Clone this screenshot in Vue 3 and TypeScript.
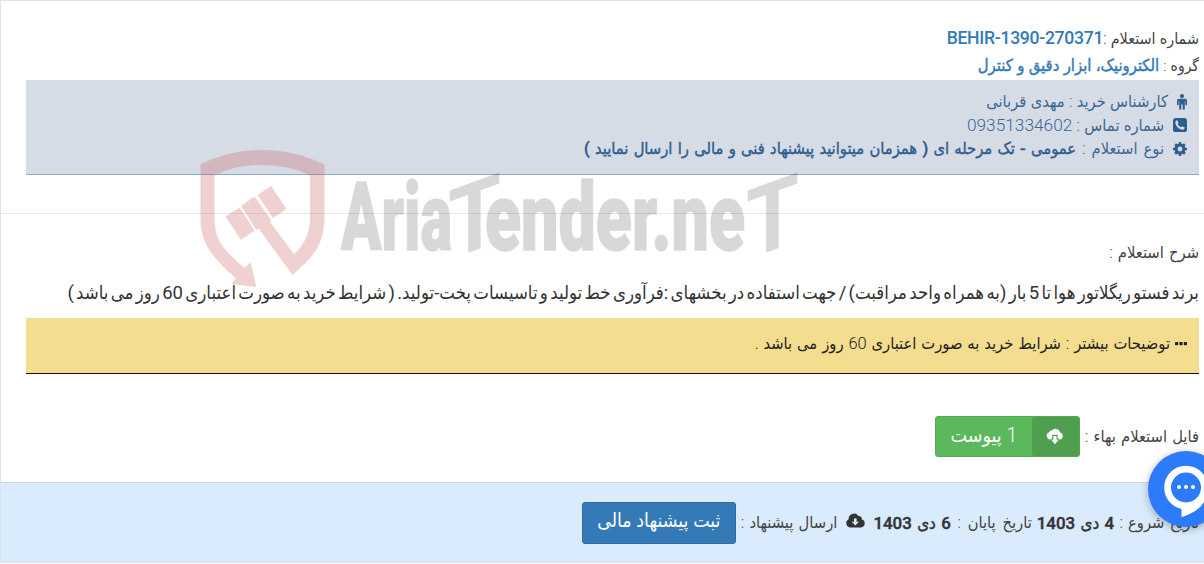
<script setup lang="ts">
interface Inquiry {
  number: string;
  group: string;
  expert: string;
  phone: string;
  type: string;
  title: string;
  description: string;
  attachments: number;
  startDate: string;
  endDate: string;
}

const inquiry: Inquiry = {
  number: 'BEHIR-1390-270371',
  group: 'الکترونیک، ابزار دقیق و کنترل',
  expert: 'مهدی قربانی',
  phone: '09351334602',
  type: 'عمومی - تک مرحله ای ( همزمان میتوانید پیشنهاد فنی و مالی را ارسال نمایید )',
  title:
    'برند فستو ریگلاتور هوا تا 5 بار (به همراه واحد مراقبت) / جهت استفاده در بخشهای :فرآوری خط تولید و تاسیسات پخت-تولید. ( شرایط خرید به صورت اعتباری 60 روز می باشد )',
  description: 'شرایط خرید به صورت اعتباری 60 روز می باشد .',
  attachments: 1,
  startDate: '4 دی 1403',
  endDate: '6 دی 1403',
};
</script>

<template>
  <div class="inquiry" dir="rtl">
    <section class="summary">
      <div class="line number-line">
        <span>شماره استعلام :</span><strong class="code">{{ inquiry.number }}</strong>
      </div>
      <div class="line group-line">
        <span>گروه :&nbsp;</span><strong>{{ inquiry.group }}</strong>
      </div>
      <div class="contact">
        <div class="contact-row">
          <svg class="icon-person" width="12" height="16" viewBox="0 0 12 16" fill="currentColor">
            <circle cx="6" cy="2.1" r="2.1" />
            <path d="M3 4.8h6a2 2 0 0 1 2 2v3.6a.8.8 0 0 1-1.7 0V7.2h-.5v7.6a1 1 0 0 1-2.1 0v-4.3h-1.4v4.3a1 1 0 0 1-2.1 0V7.2h-.5v3.2a.8.8 0 0 1-1.7 0V6.8a2 2 0 0 1 2-2z" />
          </svg>
          <span>کارشناس خرید : {{ inquiry.expert }}</span>
        </div>
        <div class="contact-row">
          <svg class="icon" width="14" height="14" viewBox="0 0 14 14">
            <rect width="14" height="14" rx="2.6" fill="currentColor" />
            <path d="M4.2 2.3 5.5 4.8 4.7 6c.7 1.5 1.8 2.5 3.2 3.2l1.2-1 2.6 1.4c-.1 1.5-1 2.1-2.2 2.1C6 11.5 2.5 8 2.3 4.5c0-1.2.7-2 1.9-2.2z" fill="#d6dce5" />
          </svg>
          <span>شماره تماس : <span class="phone">{{ inquiry.phone }}</span></span>
        </div>
        <div class="contact-row type-row">
          <svg class="icon" width="14" height="14" viewBox="0 0 14 14" fill="currentColor">
            <path fill-rule="evenodd" d="M5.9 0h2.2l.3 1.8 1.1.5L11 1.3 12.7 3l-1 1.5.5 1.1 1.8.3v2.2l-1.8.3-.5 1.1 1 1.5L11 12.7l-1.5-1-1.1.5-.3 1.8H5.9l-.3-1.8-1.1-.5-1.5 1L1.3 11l1-1.5-.5-1.1L0 8.1V5.9l1.8-.3.5-1.1-1-1.5L3 1.3l1.5 1 1.1-.5zM7 4.6a2.4 2.4 0 1 0 0 4.8 2.4 2.4 0 0 0 0-4.8z" />
          </svg>
          <span class="type-label">نوع استعلام :&nbsp;</span><strong>{{ inquiry.type }}</strong>
        </div>
      </div>
    </section>

    <section class="details">
      <div class="details-label">شرح استعلام :</div>
      <h4 class="title">{{ inquiry.title }}</h4>
      <div class="note">
        <svg class="dots" width="12" height="4" viewBox="0 0 12 4" fill="currentColor">
          <rect width="3.2" height="3.2" rx=".6" />
          <rect x="4.4" width="3.2" height="3.2" rx=".6" />
          <rect x="8.8" width="3.2" height="3.2" rx=".6" />
        </svg>
        <span>توضیحات بیشتر : {{ inquiry.description }}</span>
      </div>
      <div class="file-row">
        <span>فایل استعلام بهاء :</span>
        <button class="btn-file" type="button">
          <span class="btn-label">
            <svg width="18" height="17" viewBox="0 0 18 17">
              <path d="M4.3 11.5a3.8 3.8 0 0 1-1.200-7.300A3.200 3.200 0 0 1 6.300 2.200 4.500 4.500 0 0 1 14 4.600a3.500 3.500 0 0 1-.3 6.900z" fill="#fff" />
              <path d="M6.200 6.800h5.600v4h2L9 16.500l-4.800-5.700h2z" fill="#4f9f4f" />
              <path d="M7.400 8h3.200v3.700h2.200L9 16.300l-3.800-4.600h2.200z" fill="#fff" />
            </svg>
          </span>
          <span class="btn-text">{{ inquiry.attachments }} پیوست</span>
        </button>
      </div>
    </section>

    <footer class="actions">
      <span>تاریخ شروع :&nbsp;</span><strong>{{ inquiry.startDate }}</strong>
      <span class="end-label">تاریخ پایان :&nbsp;</span><strong>{{ inquiry.endDate }}</strong>
      <svg class="icon-cloud" width="19" height="15" viewBox="0 0 19 15">
        <path d="M4.500 14.500A4.400 4.400 0 0 1 2.600 6.200 5.300 5.300 0 0 1 12.300 3a3 3 0 0 1 3.500 3.500 4.100 4.100 0 0 1-.8 8z" fill="#333" />
        <path d="M8 5.500h2.600v3.300h2.300l-3.600 3.700-3.600-3.700H8z" fill="#d9ebfd" />
      </svg>
      <span>ارسال پیشنهاد :</span>
      <button class="btn-submit" type="button">ثبت پیشنهاد مالی</button>
    </footer>

    <!-- watermark over the content -->
    <svg class="watermark" width="612" height="144" viewBox="196 146 612 144">
      <g class="shield">
        <path d="M200.500 164.500Q229 150 262 150T324.500 164.500V220C323 247 312 258 292.500 275L259 229 256 229.500 241 206 254.500 196.500 271 220 270 222 294 254Q310 240 310 218V175.500Q290 165 262 165T214.500 175.500V220C215 242 226 252 244.500 268L250.500 262 256.500 287 231 284 236 278.500C211 256 200.500 243 200.500 218Z" />
        <path d="M225.500 216.500 239.500 207.500 254.500 230.500 241 240zM257.500 195 271 186 286.500 209 273 218z" />
      </g>
      <g class="brand">
        <text x="341" y="250" textLength="111" lengthAdjust="spacingAndGlyphs">Aria</text>
        <text class="tall" transform="translate(448 260) skewY(-20)" textLength="53" lengthAdjust="spacingAndGlyphs">T</text>
        <text x="485" y="250" textLength="260" lengthAdjust="spacingAndGlyphs">ender.ne</text>
        <text class="tall" transform="translate(746 260) skewY(-20)" textLength="53" lengthAdjust="spacingAndGlyphs">T</text>
      </g>
    </svg>

    <button class="chat" type="button" aria-label="chat">
      <svg width="76" height="76" viewBox="0 0 76 76">
        <circle cx="38" cy="36.5" r="18.4" fill="none" stroke="#fff" stroke-width="6.8" />
        <path d="M33.5 52.5V66C48 62 59 53 60 38L50 48Q44 55 33.5 57z" fill="#fff" />
        <circle cx="31" cy="36" r="2" fill="#fff" />
        <circle cx="38" cy="36" r="2" fill="#fff" />
        <circle cx="45" cy="36" r="2" fill="#fff" />
      </svg>
    </button>
  </div>
</template>

<style>
body {
  margin: 0;
  overflow: hidden;
  background: #fff;
}
</style>

<style scoped>
.inquiry {
  position: relative;
  box-sizing: border-box;
  width: 1204px;
  height: 563px;
  overflow: hidden;
  border-top: 1px solid #dee2e8;
  border-left: 1px solid #dee2e8;
  border-bottom: 1px solid #dee2e8;
  font-family: Roboto, 'DejaVu Sans Condensed', 'DejaVu Sans', sans-serif;
  font-size: 16.4px;
  font-weight: 300;
  word-spacing: 1.2px;
  color: #444;
  white-space: nowrap;
}

/* the Arabic face is thickened a little instead of using its wide bold cut */
strong {
  font-weight: 500;
  -webkit-text-stroke: 0.4px currentColor;
  color: #333;
}

.summary {
  box-sizing: border-box;
  height: 213px;
  padding: 23px 5px 0 25px;
  border-bottom: 1px solid #e7e7e7;
  word-spacing: 0.3px;
}

.line {
  display: flex;
  align-items: center;
  height: 28px;
  font-size: 16px;
}

.group-line {
  height: 27px;
  margin-bottom: 1px;
  font-size: 15.5px;
}

.line strong {
  font-size: 16.5px;
  color: #337ab7;
}

.line .code {
  font-size: 17.6px;
  letter-spacing: -0.3px;
  -webkit-text-stroke: 0;
}

.contact {
  box-sizing: border-box;
  height: 95px;
  padding: 10px 12px 0 0;
  background: #d6dce5;
  border-bottom: 1px solid #8eacc8;
  color: #3d6794;
}

.contact strong {
  color: #2f5d8f;
}

.contact-row {
  display: flex;
  align-items: center;
  height: 23.5px;
}

.contact-row svg {
  color: #2f5d8f;
}

.phone {
  font-size: 17.3px;
}

.type-row {
  word-spacing: 1.2px;
}

.type-label {
  word-spacing: 2px;
}

.icon {
  margin-left: 9px;
}

.icon-person {
  margin-right: -1px;
  margin-left: 8px;
}

.details {
  box-sizing: border-box;
  height: 268px;
  padding: 26px 5px 0 25px;
}

.details-label {
  display: flex;
  align-items: center;
  height: 25px;
}

.title {
  display: flex;
  align-items: center;
  box-sizing: border-box;
  height: 53px;
  margin: 0;
  padding-top: 2px;
  font-size: 18.5px;
  font-weight: 400;
  word-spacing: -2.3px;
  color: #333;
}

.note {
  display: flex;
  align-items: center;
  box-sizing: border-box;
  height: 56px;
  padding: 0 12px 4px 0;
  background: #f5dd90;
  border-bottom: 1px solid #111;
  color: #222;
  word-spacing: 0.9px;
}

.dots {
  margin-left: 5px;
}

.file-row {
  display: flex;
  align-items: center;
  height: 41px;
  margin-top: 42px;
}

.btn-file {
  display: flex;
  box-sizing: border-box;
  width: 145px;
  height: 41px;
  margin: 0 5px 0 0;
  padding: 0;
  border: 1px solid #4cae4c;
  border-radius: 3px;
  background: #5cb85c;
  color: #fff;
  font: inherit;
  font-size: 19.5px;
}

.btn-label {
  display: flex;
  align-items: center;
  justify-content: center;
  width: 47px;
  height: 39px;
  border-radius: 3px;
  background: #4f9f4f;
}

.btn-text {
  display: flex;
  flex: 1;
  align-items: center;
  justify-content: center;
  height: 37px;
}

.actions {
  display: flex;
  align-items: center;
  box-sizing: border-box;
  height: 80px;
  padding: 0 5px 0 0;
  border-top: 1px solid #c5d8ec;
  background: #d9ebfd;
}

.actions strong {
  font-size: 16.9px;
}

.end-label {
  margin-right: 5px;
  word-spacing: 2.7px;
}

.icon-cloud {
  margin: 0 8px 4px 9px;
}

.btn-submit {
  box-sizing: border-box;
  width: 154px;
  height: 42px;
  margin: 0 5px 0 0;
  padding: 0 0 4px;
  border: 1px solid #2e6da4;
  border-radius: 3px;
  background: #337ab7;
  color: #fff;
  font: inherit;
  font-size: 19.4px;
}

.watermark {
  position: absolute;
  top: 145px;
  left: 195px;
}

.shield {
  fill: #c9545a;
  fill-opacity: 0.27;
}

.brand {
  fill: #000;
  stroke: #000;
  stroke-width: 1.5px;
  opacity: 0.15;
  font-family: Roboto, sans-serif;
  font-size: 94px;
  font-weight: 900;
  direction: ltr;
  word-spacing: 0;
}

.tall {
  font-size: 97px;
  font-weight: 700;
  stroke-width: 0;
}

.chat {
  position: absolute;
  top: 450px;
  left: 1147px;
  width: 76px;
  height: 76px;
  padding: 0;
  border: 0;
  border-radius: 50%;
  background: #2b7bfb;
  box-shadow: 0 2px 8px rgba(0, 0, 0, 0.3);
}
</style>
